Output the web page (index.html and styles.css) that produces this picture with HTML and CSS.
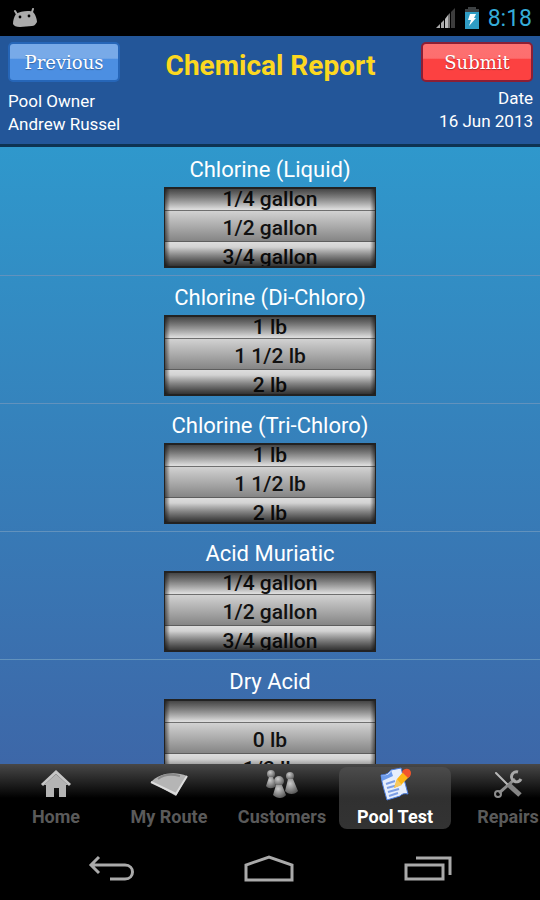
FILE: index.html
```
<!DOCTYPE html>
<html lang="en">
<head>
<meta charset="utf-8">
<meta name="viewport" content="width=device-width, initial-scale=1">
<title>Chemical Report</title>
<link rel="stylesheet" href="styles.css">
</head>
<body>

<div class="statusbar">
  <svg class="android" width="26" height="20" viewBox="0 0 26 20" aria-hidden="true">
    <path d="M3 3l3 5M21 1l-2 6" stroke="#aaa" stroke-width="2" stroke-linecap="round"/>
    <path d="M4 6C8 3 18 2 21 4c3 3 4 8 4 10-2 3-3 4-5 4l-12 1c-4 0-6-1-7-3 0-4 1-7 3-10z" fill="#aaa"/>
    <circle cx="8" cy="9" r="1.4"/>
    <circle cx="17" cy="8" r="1.4"/>
  </svg>
  <svg class="signal" width="20" height="22" viewBox="0 0 20 22" aria-hidden="true">
    <path d="M0 21l4-4v4z" fill="#aaa"/>
    <path d="M5 16l3-3v8H5z" fill="#aaa"/>
    <path d="M9 12l3-4v13H9z" fill="#bbb"/>
    <path d="M12 8l2-2v15h-2z" fill="#777"/>
    <path d="M15 5l4-4v20h-4z" fill="#3c3c3c"/>
  </svg>
  <svg class="battery" width="16" height="23" viewBox="0 0 16 23" aria-hidden="true">
    <path d="M4 0h8v2h3v4H1V2h3z" fill="#3d4143"/>
    <path d="M1 5h14v17H1z" fill="#2f9cc4"/>
    <path d="M6 7h6l-2 4h2l-7 8 2-6H4z" fill="#fff"/>
  </svg>
  <span class="clock">8:18</span>
</div>

<header class="header">
  <div class="toolbar">
    <button type="button" class="btn btn-previous">Previous</button>
    <h1>Chemical Report</h1>
    <button type="button" class="btn btn-submit">Submit</button>
  </div>
  <div class="info">
    <div class="owner">Pool Owner<br>Andrew Russel</div>
    <div class="date">Date<br>16 Jun 2013</div>
  </div>
</header>

<main class="report">
  <section class="chemical">
    <h2 id="liquid">Chlorine (Liquid)</h2>
    <ul class="picker" role="listbox" aria-labelledby="liquid">
      <li role="option">1/4 gallon</li>
      <li role="option" aria-selected="true">1/2 gallon</li>
      <li role="option">3/4 gallon</li>
    </ul>
  </section>
  <section class="chemical">
    <h2 id="dichloro">Chlorine (Di-Chloro)</h2>
    <ul class="picker" role="listbox" aria-labelledby="dichloro">
      <li role="option">1 lb</li>
      <li role="option" aria-selected="true">1 1/2 lb</li>
      <li role="option">2 lb</li>
    </ul>
  </section>
  <section class="chemical">
    <h2 id="trichloro">Chlorine (Tri-Chloro)</h2>
    <ul class="picker" role="listbox" aria-labelledby="trichloro">
      <li role="option">1 lb</li>
      <li role="option" aria-selected="true">1 1/2 lb</li>
      <li role="option">2 lb</li>
    </ul>
  </section>
  <section class="chemical">
    <h2 id="muriatic">Acid Muriatic</h2>
    <ul class="picker" role="listbox" aria-labelledby="muriatic">
      <li role="option">1/4 gallon</li>
      <li role="option" aria-selected="true">1/2 gallon</li>
      <li role="option">3/4 gallon</li>
    </ul>
  </section>
  <section class="chemical">
    <h2 id="dryacid">Dry Acid</h2>
    <ul class="picker" role="listbox" aria-labelledby="dryacid">
      <li role="presentation"></li>
      <li role="option" aria-selected="true">0 lb</li>
      <li role="option">1/2 lb</li>
    </ul>
  </section>
</main>

<nav class="tabs">
  <a href="#home" class="tab">
    <svg width="36" height="34" viewBox="0 0 36 34" aria-hidden="true">
      <path d="M8 18h20v12h-7v-9h-5v9H8z" fill="#b4b4b4"/>
      <path d="M18 7l12 11H6z" fill="#b4b4b4"/>
      <path d="M4 18L18 5l14 13" fill="none" stroke="#c6c6c6" stroke-width="3"/>
    </svg>
    Home
  </a>
  <a href="#route" class="tab">
    <svg width="40" height="34" viewBox="0 0 40 34" aria-hidden="true">
      <path d="M2 15C10 6 26 4 38 9L27 29z" fill="#b5b5b5"/>
      <path d="M2 15l25 12L38 9" fill="none" stroke="#ddd" stroke-width="2"/>
      <path d="M9 12C15 7 23 7 31 9" fill="none" stroke="#8a8a8a" stroke-width="2"/>
    </svg>
    My Route
  </a>
  <a href="#customers" class="tab">
    <svg width="36" height="34" viewBox="0 0 36 34" aria-hidden="true">
      <defs>
        <radialGradient id="pawn" cx="0.4" cy="0.3" r="0.7">
          <stop offset="0" stop-color="#ccc"/>
          <stop offset="1" stop-color="#5c5c5c"/>
        </radialGradient>
      </defs>
      <g fill="url(#pawn)">
        <circle cx="7" cy="7" r="4"/>
        <path d="M5 10h4l3 9c-3 3-8 3-10 0z"/>
        <circle cx="26" cy="9" r="4"/>
        <path d="M24 12h5l5 12c-3 4-10 4-13 0z"/>
        <circle cx="15" cy="14" r="5"/>
        <path d="M12 18h6l4 10c-3 4-9 4-13 0z"/>
      </g>
    </svg>
    Customers
  </a>
  <a href="#pooltest" class="tab active" aria-current="page">
    <svg width="36" height="34" viewBox="0 0 36 34" aria-hidden="true">
      <path d="M4 8C9 8 12 6 14 3l10-2 7 26c-4-1-6 0-8 2L10 33C8 25 5 18 4 8z" fill="#e6eefc" stroke="#4c7ee0" stroke-width="1"/>
      <path d="M4 8c6 1 10-1 10-5l2 6-11 5z" fill="#6c9bec"/>
      <path d="M9 17l9-3M10 21l11-3M11 25l11-3M12 29l9-3" stroke="#7d9fe6" stroke-width="2"/>
      <path d="M17 21l3-9 7-8 6 5-9 9z" fill="#fdb515"/>
      <path d="M17 21l3-9 5 6z" fill="#f7c860"/>
      <path d="M25 5c2-5 9-4 9 1 0 2-1 4-3 5z" fill="#f2552c"/>
    </svg>
    Pool Test
  </a>
  <a href="#repairs" class="tab">
    <svg width="36" height="34" viewBox="0 0 36 34" aria-hidden="true">
      <path d="M9 26L25 12" stroke="#8e8e8e" stroke-width="3"/>
      <circle cx="8" cy="27" r="3" fill="none" stroke="#8e8e8e" stroke-width="2"/>
      <path d="M28 5a5 5 0 1 0 3 7" fill="none" stroke="#a8a8a8" stroke-width="3"/>
      <path d="M6 6l13 13" stroke="#b8b8b8" stroke-width="2" stroke-linecap="round"/>
      <path d="M18 17l12 11" stroke="#858585" stroke-width="5"/>
    </svg>
    Repairs
  </a>
</nav>

<div class="sysnav">
  <button type="button" aria-label="Back">
    <svg width="48" height="28" viewBox="0 0 48 28" fill="none" stroke="#aaa" stroke-width="3">
      <path d="M11 2L3 10l8 8M3 10h34c10 0 10 14 0 14H22"/>
    </svg>
  </button>
  <button type="button" aria-label="Home">
    <svg width="52" height="28" viewBox="0 0 52 28" fill="none" stroke="#aaa" stroke-width="3">
      <path d="M3 25V10L26 2l23 8v15z"/>
    </svg>
  </button>
  <button type="button" aria-label="Recent apps">
    <svg width="50" height="28" viewBox="0 0 50 28" fill="none" stroke="#aaa" stroke-width="3">
      <path d="M4 10h37v14H4zM14 3h34v17"/>
    </svg>
  </button>
</div>

</body>
</html>
```
FILE: styles.css
```
* {
	box-sizing: border-box;
}

body {
	margin: 0;
	height: 100vh;
	display: flex;
	flex-direction: column;
	background: #000;
	color: #fff;
	font-family: Roboto, "Liberation Sans", sans-serif;
	overflow: hidden;
}

button {
	font: inherit;
	cursor: pointer;
}

/* status bar */

.statusbar {
	flex: none;
	height: 36px;
	display: flex;
	align-items: center;
	padding: 0 8px 0 12px;
	background: #000;
}

.signal {
	margin-left: auto;
}

.battery {
	margin: 0 8px;
}

.clock {
	color: #35acd8;
	font-size: 23px;
}

/* header */

.header {
	flex: none;
	height: 111px;
	padding: 6px 7px 0 8px;
	background: #235699;
	border-bottom: 3px solid #0e3352;
}

.toolbar {
	display: flex;
	justify-content: space-between;
	align-items: center;
}

h1 {
	margin: 0;
	padding-top: 8px;
	color: #fcd820;
	font-size: 28px;
	font-weight: 700;
	line-height: 32px;
}

.btn {
	width: 112px;
	height: 40px;
	padding: 0;
	border-radius: 5px;
	color: #fff;
	font-family: "DejaVu Serif", serif;
	font-size: 18px;
	text-shadow: 0 1px 1px rgba(0, 0, 0, 0.3);
}

.btn-previous {
	border: 2px solid #2666b8;
	background: linear-gradient(#78aae8 0, #78aae8 40%, #4c8fe2 41%, #4c8fe2 100%);
}

.btn-submit {
	border: 2px solid #8c1f35;
	background: linear-gradient(#fd7171 0, #fd6e6e 40%, #fc4141 41%, #fc4141 100%);
}

.info {
	display: flex;
	justify-content: space-between;
	font-size: 17px;
	line-height: 23px;
}

.owner {
	padding-top: 8px;
}

.date {
	padding-top: 5px;
	text-align: right;
}

/* chemicals */

.report {
	flex: 1;
	min-height: 0;
	padding-top: 1px;
	overflow: hidden;
	background: linear-gradient(#2f98cc, #3d67a8);
}

.chemical {
	height: 128px;
	padding-top: 8px;
	border-bottom: 1px solid #6292bd;
}

h2 {
	margin: 0 0 3px 0;
	font-size: 22px;
	font-weight: 400;
	line-height: 28px;
	text-align: center;
}

.picker {
	position: relative;
	width: 212px;
	height: 81px;
	margin: 0 auto;
	padding: 0;
	overflow: hidden;
	list-style: none;
	color: #111;
	font-size: 21px;
	font-weight: 500;
	text-align: center;
	background: linear-gradient(#aaa 0, #ddd 23px, #666 23px, #777 24px, #d2d2d2 24px, #858585 54px, #555 54px, #666 55px, #ddd 55px, #aaa 80px);
}

.picker li {
	height: 29px;
	line-height: 29px;
}

.picker li:first-child {
	height: 27px;
	line-height: 25px;
}

/* shading over the edges of the wheel */
.picker::after {
	content: "";
	position: absolute;
	top: 0;
	right: 0;
	bottom: 0;
	left: 0;
	border: solid #222;
	border-width: 2px 1px;
	background:
		linear-gradient(rgba(0, 0, 0, 0.6), rgba(0, 0, 0, 0) 20px, rgba(0, 0, 0, 0) 58px, rgba(0, 0, 0, 0.7)),
		linear-gradient(90deg, rgba(0, 0, 0, 0.5), rgba(0, 0, 0, 0) 5px, rgba(0, 0, 0, 0) 205px, rgba(0, 0, 0, 0.5));
}

/* tabs */

.tabs {
	flex: none;
	display: flex;
	gap: 1px;
	height: 68px;
	padding: 3px 0;
	overflow: hidden;
	background: linear-gradient(#484848, #000 34px);
}

.tab {
	flex: none;
	width: 112px;
	display: flex;
	flex-direction: column;
	align-items: center;
	border-radius: 8px;
	color: #5a5a5a;
	font-size: 18px;
	font-weight: 700;
	line-height: 31px;
	text-decoration: none;
	white-space: nowrap;
}

.tab svg {
	flex: none;
}

.tab.active {
	color: #fff;
	background: linear-gradient(#4c4c4c, #303030 50%, #333);
}

/* system navigation */

.sysnav {
	flex: none;
	display: flex;
	justify-content: center;
	gap: 107px;
	height: 68px;
	align-items: center;
	padding-top: 6px;
}

.sysnav button {
	display: flex;
	padding: 0;
	border: 0;
	background: none;
}
```
